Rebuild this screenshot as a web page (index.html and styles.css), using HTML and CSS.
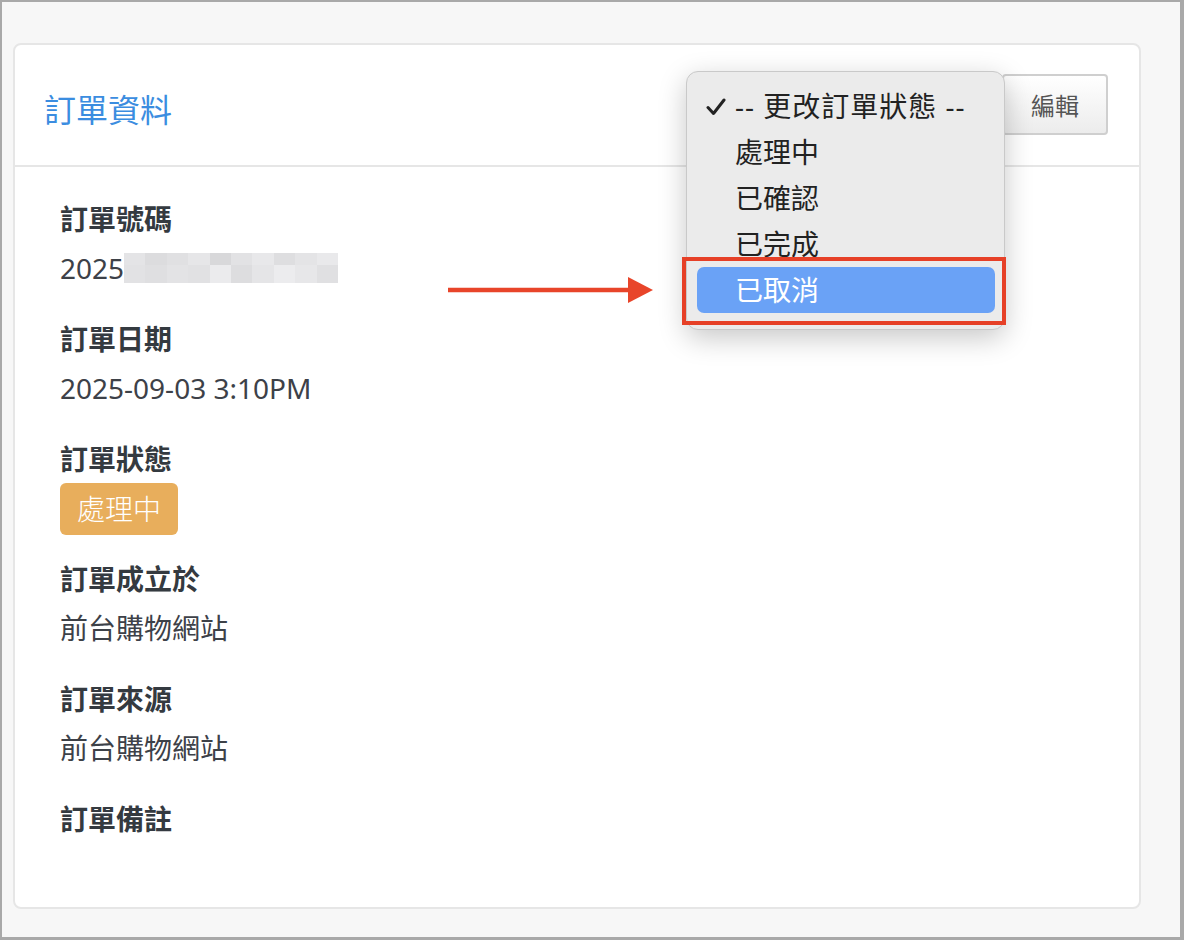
FILE: index.html
```html
<!DOCTYPE html>
<html lang="zh-Hant">
<head>
    <meta charset="UTF-8">
    <meta name="viewport" content="width=device-width, initial-scale=1.0">
    <title>訂單資料</title>
    <link rel="stylesheet" href="styles.css">
</head>
<body>
    <div class="screen">
        <div class="card">
            <div class="card-header">
                <h2 class="card-title">訂單資料</h2>
                <button class="btn-edit">編輯</button>

                <!-- status picker, opened -->
                <ul class="status-menu">
                    <li class="menu-item checked">
                        <svg class="check" viewBox="0 0 20 18" width="20" height="18">
                            <path d="M2 9.5 L7.5 15.5 L18 2" fill="none" stroke="#222" stroke-width="3" stroke-linecap="round" stroke-linejoin="round"/>
                        </svg>
                        -- 更改訂單狀態 --
                    </li>
                    <li class="menu-item">處理中</li>
                    <li class="menu-item">已確認</li>
                    <li class="menu-item">已完成</li>
                    <li class="menu-item active">已取消</li>
                </ul>
                <div class="mark-box"></div>
            </div>

            <div class="card-body">
                <div class="field">
                    <div class="field-label">訂單號碼</div>
                    <div class="field-value">2025<span class="mosaic">
                        <i style="background:#e4e4e6"></i><i style="background:#dcdcde"></i><i style="background:#e0e0e2"></i><i style="background:#e6e6e8"></i><i style="background:#d8d8da"></i><i style="background:#e2e2e4"></i><i style="background:#e8e8ea"></i><i style="background:#dedee0"></i><i style="background:#e4e4e6"></i><i style="background:#e9e9eb"></i>
                        <i style="background:#e2e2e4"></i><i style="background:#dfdfe1"></i><i style="background:#e3e3e5"></i><i style="background:#e1e1e3"></i><i style="background:#ebebed"></i><i style="background:#dddddf"></i><i style="background:#e5e5e7"></i><i style="background:#ececee"></i><i style="background:#e7e7e9"></i><i style="background:#e0e0e2"></i>
                    </span></div>
                </div>
                <div class="field">
                    <div class="field-label">訂單日期</div>
                    <div class="field-value">2025-09-03 3:10PM</div>
                </div>
                <div class="field field-badge">
                    <div class="field-label">訂單狀態</div>
                    <span class="badge badge-warning">處理中</span>
                </div>
                <div class="field">
                    <div class="field-label">訂單成立於</div>
                    <div class="field-value">前台購物網站</div>
                </div>
                <div class="field">
                    <div class="field-label">訂單來源</div>
                    <div class="field-value">前台購物網站</div>
                </div>
                <div class="field">
                    <div class="field-label">訂單備註</div>
                </div>
            </div>

            <svg class="pointer" viewBox="0 0 210 30" width="210" height="30">
                <line x1="3" y1="15" x2="186" y2="15" stroke="#e8452a" stroke-width="4.5"/>
                <polygon points="183,2 208,15 183,28" fill="#e8452a"/>
            </svg>
        </div>
    </div>
</body>
</html>
```

FILE: styles.css
```css
* {
    box-sizing: border-box;
}
body {
    margin: 0;
    font-family: "Noto Sans", "Noto Sans CJK TC", sans-serif;
    color: #343a40;
}
.screen {
    width: 1184px;
    height: 940px;
    background-color: #f7f7f7;
    border-style: solid;
    border-color: #a9a9a9;
    border-width: 2px 4px 3px 2px;
    padding: 41px 0 0 11px;
}
.card {
    position: relative;
    width: 1128px;
    height: 866px;
    background-color: #fff;
    border: 2px solid #e6e6e6;
    border-radius: 8px;
}
.card-header {
    position: relative;
    height: 122px;
    display: flex;
    align-items: center;
    justify-content: space-between;
    padding: 0 31px 0 30px;
    border-bottom: 2px solid #e6e6e6;
}
.card-title {
    margin: 6px 0 0 -1px;
    font-size: 32px;
    font-weight: 400;
    color: #3b8de0;
}
.btn-edit {
    width: 106px;
    height: 61px;
    margin-bottom: 2px;
    font-family: inherit;
    font-size: 24px;
    color: #555;
    background: linear-gradient(#fff, #ececec);
    border: 2px solid #cfcfcf;
    border-radius: 4px;
}

/* dropdown */
.status-menu {
    position: absolute;
    left: 671px;
    top: 26px;
    width: 319px;
    height: 259px;
    margin: 0;
    padding: 11px 9px 0 10px;
    list-style: none;
    background-color: #ebebeb;
    border: 1px solid #c9c9c9;
    border-radius: 12px;
    box-shadow: 0 8px 28px rgba(0, 0, 0, 0.22);
}
.menu-item {
    position: relative;
    height: 46px;
    line-height: 46px;
    padding-left: 38px;
    font-size: 28px;
    color: #222;
    border-radius: 7px;
}
.menu-item.checked {
    letter-spacing: 1px;
}
.menu-item .check {
    position: absolute;
    left: 9px;
    top: 15px;
}
.menu-item.active {
    background-color: #6aa2f6;
    color: #fff;
}
.mark-box {
    position: absolute;
    left: 667px;
    top: 212px;
    width: 324px;
    height: 68px;
    border: 4px solid #e64027;
}

.card-body {
    padding: 34px 45px 0;
}
.field {
    height: 120px;
}
.field-label {
    font-size: 28px;
    line-height: 36px;
    font-weight: 700;
    color: #343a40;
}
.field-value {
    margin-top: 13px;
    font-size: 28px;
    line-height: 36px;
    color: #3d4148;
    display: flex;
    align-items: center;
}
.mosaic {
    display: grid;
    grid-template-columns: repeat(10, 21.4px);
    grid-template-rows: 12px 18px;
    margin-left: 0;
}
.mosaic i {
    display: block;
}
.badge {
    display: inline-block;
    margin-top: 6px;
    height: 52px;
    line-height: 52px;
    padding: 0 17px;
    font-size: 28px;
    font-weight: 300;
    border-radius: 6px;
}
.badge-warning {
    background-color: #e8ae5c;
    color: #fff;
}
.pointer {
    position: absolute;
    left: 430px;
    top: 230px;
}
```
